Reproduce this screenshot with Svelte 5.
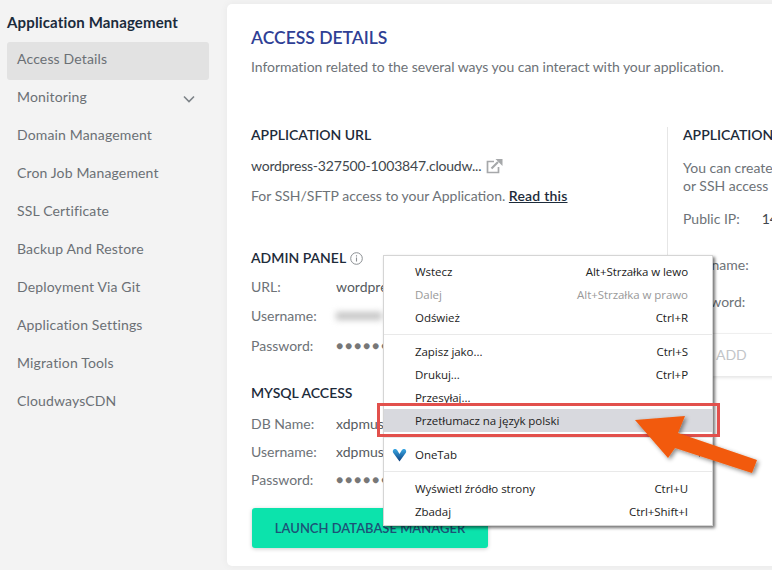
<script lang="ts">
	const navItems = [
		'Access Details',
		'Monitoring',
		'Domain Management',
		'Cron Job Management',
		'SSL Certificate',
		'Backup And Restore',
		'Deployment Via Git',
		'Application Settings',
		'Migration Tools',
		'CloudwaysCDN'
	];

	const menuGroups = [
		[
			{ label: 'Wstecz', keys: 'Alt+Strzałka w lewo' },
			{ label: 'Dalej', keys: 'Alt+Strzałka w prawo', disabled: true },
			{ label: 'Odśwież', keys: 'Ctrl+R' }
		],
		[
			{ label: 'Zapisz jako...', keys: 'Ctrl+S' },
			{ label: 'Drukuj...', keys: 'Ctrl+P' },
			{ label: 'Przesyłaj...', keys: '' },
			{ label: 'Przetłumacz na język polski', keys: '', active: true }
		],
		[{ label: 'OneTab', keys: '', extension: true }],
		[
			{ label: 'Wyświetl źródło strony', keys: 'Ctrl+U' },
			{ label: 'Zbadaj', keys: 'Ctrl+Shift+I' }
		]
	];
</script>

<main class="page">
	<aside class="sidebar">
		<h2>Application Management</h2>
		<nav>
			{#each navItems as item, index (item)}
				<div class="nav-item" class:selected={index === 0}>
					<span>{item}</span>
					{#if item === 'Monitoring'}
						<svg width="12" height="8" viewBox="0 0 12 8" fill="none">
							<path d="M1 1.5l5 5 5-5" stroke="#7d8388" stroke-width="1.6" />
						</svg>
					{/if}
				</div>
			{/each}
		</nav>
	</aside>

	<section class="card">
		<header class="card-head">
			<h1>ACCESS DETAILS</h1>
			<p>Information related to the several ways you can interact with your application.</p>
		</header>

		<div class="columns">
			<div class="left">
				<h3>APPLICATION URL</h3>
				<div class="url-line">
					<span>wordpress-327500-1003847.cloudw...</span>
					<svg width="17" height="16" viewBox="0 0 17 16" fill="none">
						<path d="M8 3.5H1.5V14.5H12.5V9" stroke="#a6a8aa" stroke-width="1.7" />
						<path d="M5.5 10.5L12 4" stroke="#a6a8aa" stroke-width="2.2" />
						<path d="M9.5 1h7v7z" fill="#a6a8aa" />
					</svg>
				</div>
				<p class="ssh">For SSH/SFTP access to your Application. <a href="#read">Read this</a></p>

				<h3 class="admin">
					ADMIN PANEL
					<svg width="13" height="13" viewBox="0 0 13 13" fill="none">
						<circle cx="6.5" cy="6.5" r="5.8" stroke="#8b8f93" />
						<path d="M6.5 5.5v4M6.5 3.2v1.2" stroke="#8b8f93" stroke-width="1.1" />
					</svg>
				</h3>
				<dl class="fields admin-fields">
					<div><dt>URL:</dt><dd>wordpress</dd></div>
					<div><dt>Username:</dt><dd><span class="blurred"></span></dd></div>
					<div><dt>Password:</dt><dd class="dots">●●●●●●</dd></div>
				</dl>

				<h3 class="mysql">MYSQL ACCESS</h3>
				<dl class="fields mysql-fields">
					<div><dt>DB Name:</dt><dd>xdpmus</dd></div>
					<div><dt>Username:</dt><dd>xdpmus</dd></div>
					<div><dt>Password:</dt><dd class="dots">●●●●●●</dd></div>
				</dl>

				<button type="button">LAUNCH DATABASE MANAGER</button>
			</div>

			<div class="right">
				<h3>APPLICATION</h3>
				<p class="create">You can create<br />or SSH access</p>
				<div class="ip"><span>Public IP:</span><b>14</b></div>
				<p class="cred first">Username:</p>
				<p class="cred second">Password:</p>
				<div class="add-box">ADD</div>
			</div>
		</div>
	</section>

	<div class="context-menu">
		{#each menuGroups as group, index}
			{#if index > 0}<div class="separator"></div>{/if}
			{#each group as item (item.label)}
				<div class="menu-item" class:disabled={item.disabled} class:active={item.active}>
					{#if item.extension}
						<svg class="onetab" width="15" height="14" viewBox="0 0 15 14">
							<defs>
								<linearGradient id="onetab-fill" x1="0" y1="0" x2="0" y2="1">
									<stop offset="0" stop-color="#3aa8e4" />
									<stop offset="1" stop-color="#0d3f7f" />
								</linearGradient>
							</defs>
							<path
								d="M7.5 13.5L1 4.4C.5 3.2 1 1.6 2.4 1.1c1.4-.4 2.2.2 3 1.3L7.5 6l2.1-3.6c.8-1.1 1.6-1.7 3-1.3 1.4.5 1.9 2.1 1.4 3.3z"
								fill="url(#onetab-fill)"
							/>
						</svg>
						<span class="sub-arrow"></span>
					{/if}
					<span>{item.label}</span>
					<span>{item.keys}</span>
				</div>
			{/each}
		{/each}
	</div>

	<div class="highlight"></div>

	<svg class="arrow" width="150" height="80" viewBox="0 0 150 80">
		<defs>
			<filter id="arrow-shadow" x="-10%" y="-10%" width="125%" height="130%">
				<feDropShadow dx="2" dy="2" stdDeviation="2" flood-color="#000" flood-opacity="0.45" />
			</filter>
		</defs>
		<path
			d="M5 10L55 6L48 23L127 50L122 63L45 38L38 48z"
			fill="#f25a0a"
			filter="url(#arrow-shadow)"
		/>
	</svg>
</main>

<style>
	:global(body) {
		margin: 0;
		background: #f3f3f3;
	}

	.page {
		position: relative;
		display: flex;
		width: 772px;
		height: 570px;
		overflow: hidden;
		background: #f3f3f3;
		color: #6d7277;
		font-family: 'Lato', 'Liberation Sans', sans-serif;
		font-size: 14px;
	}

	.sidebar {
		flex: none;
		box-sizing: border-box;
		width: 227px;
		padding: 13px 18px 0 7px;
	}

	.sidebar h2 {
		margin: 0 0 10px;
		color: #1b2b3c;
		font-size: 15px;
		font-weight: 700;
		letter-spacing: 0.15px;
		line-height: 19px;
	}

	.nav-item {
		display: flex;
		box-sizing: border-box;
		align-items: center;
		justify-content: space-between;
		height: 38px;
		padding: 0 13px 5px 10px;
		border-radius: 3px;
		color: #6b7075;
		letter-spacing: 0.15px;
	}

	.nav-item svg {
		margin: 5px 1px 0 0;
	}

	.nav-item.selected {
		background: #e2e2e2;
	}

	.card {
		flex: none;
		box-sizing: border-box;
		width: 600px;
		height: 562px;
		margin-top: 4px;
		padding: 24px 0 0 24px;
		border-radius: 5px 0 0 5px;
		background: #fff;
		box-shadow: 0 0 8px rgba(0, 0, 0, 0.05);
	}

	.card-head h1 {
		margin: 0;
		color: #2f3f95;
		font-size: 17.5px;
		font-weight: 600;
		line-height: 20px;
	}

	.card-head p {
		margin: 10px 0 0;
		letter-spacing: -0.04px;
		line-height: 18px;
	}

	h3 {
		margin: 0;
		color: #1d2b3a;
		font-size: 14px;
		font-weight: 600;
		line-height: 16px;
	}

	.columns {
		display: flex;
		margin-top: 51px;
	}

	.left {
		flex: none;
		width: 416px;
	}

	.url-line {
		display: flex;
		align-items: center;
		gap: 5px;
		margin-top: 14px;
		color: #41474d;
		letter-spacing: -0.2px;
		line-height: 18px;
	}

	.url-line svg {
		margin-top: -1px;
	}

	.ssh {
		margin: 12px 0 0;
		line-height: 18px;
	}

	.ssh a {
		color: #1d2b3a;
		font-weight: 600;
		letter-spacing: 0.2px;
	}

	.admin {
		display: flex;
		align-items: center;
		gap: 4px;
		margin-top: 45px;
	}

	.fields {
		margin: 0;
	}

	.fields div {
		display: flex;
		align-items: center;
	}

	.fields dt {
		width: 85px;
	}

	.fields dd {
		margin: 0;
		color: #565b60;
	}

	.admin-fields {
		margin-top: 5.5px;
	}

	.admin-fields div {
		height: 29.5px;
	}

	.blurred {
		display: block;
		width: 46px;
		height: 8px;
		background: #c4c4c4;
		filter: blur(3px);
	}

	.fields .dots {
		color: #777;
		font-size: 12px;
		letter-spacing: 1.8px;
		white-space: nowrap;
	}

	.mysql {
		margin-top: 25px;
	}

	.mysql-fields {
		margin-top: 8px;
	}

	.mysql-fields div {
		height: 28px;
	}

	button {
		display: block;
		width: 236px;
		height: 40px;
		margin: 15px 0 0 1px;
		padding: 0;
		border: 0;
		border-radius: 3px;
		background: #0ce3ac;
		box-shadow: 0 1px 4px rgba(0, 0, 0, 0.2);
		color: #1d5277;
		font: inherit;
		font-size: 13px;
		font-weight: 600;
	}

	.right {
		flex: none;
		width: 200px;
		box-sizing: border-box;
		height: 249px;
		padding: 0 0 0 15px;
		border-left: 1px solid #e6e6e6;
		white-space: nowrap;
	}

	.create {
		margin: 16px 0 0;
		line-height: 18px;
	}

	.ip {
		display: flex;
		gap: 22px;
		margin-top: 15px;
		line-height: 18px;
	}

	.ip b {
		color: #41474d;
		font-weight: 400;
	}

	.cred {
		margin: 0;
		line-height: 18px;
	}

	.cred.first {
		margin-top: 28px;
	}

	.cred.second {
		margin-top: 19px;
	}

	.add-box {
		height: 18px;
		margin: 22px 0 0 -15px;
		padding: 12px 0 12px 48px;
		border-top: 1px solid #efefef;
		box-shadow: 0 2px 3px rgba(0, 0, 0, 0.1);
		color: #c2c5c8;
		line-height: 18px;
	}

	.context-menu {
		position: absolute;
		top: 255px;
		left: 383px;
		box-sizing: border-box;
		width: 330px;
		height: 271px;
		padding: 4px 0 2px;
		border: 1px solid #d5d5d5;
		background: #fff;
		box-shadow: 2px 2px 3px rgba(0, 0, 0, 0.55);
		color: #222;
		font-family: 'Open Sans', 'Liberation Sans', sans-serif;
		font-size: 11.5px;
		letter-spacing: -0.05px;
	}

	.menu-item {
		position: relative;
		display: flex;
		justify-content: space-between;
		height: 23px;
		padding: 0 24px 0 31px;
		line-height: 23px;
	}

	.menu-item.disabled {
		color: #999;
	}

	.menu-item.active {
		background: #d8d9de;
	}

	.separator {
		height: 1px;
		margin: 5px 0;
		background: #e9e9e9;
	}

	.onetab {
		position: absolute;
		top: 5px;
		left: 8px;
	}

	.sub-arrow {
		position: absolute;
		top: 8px;
		right: 9px;
		border-top: 3px solid transparent;
		border-bottom: 3px solid transparent;
		border-left: 4px solid #555;
	}

	.highlight {
		position: absolute;
		top: 403px;
		left: 377px;
		box-sizing: border-box;
		width: 343px;
		height: 34px;
		border: 3px solid #e2504c;
	}

	.arrow {
		position: absolute;
		top: 410px;
		left: 630px;
	}
</style>
